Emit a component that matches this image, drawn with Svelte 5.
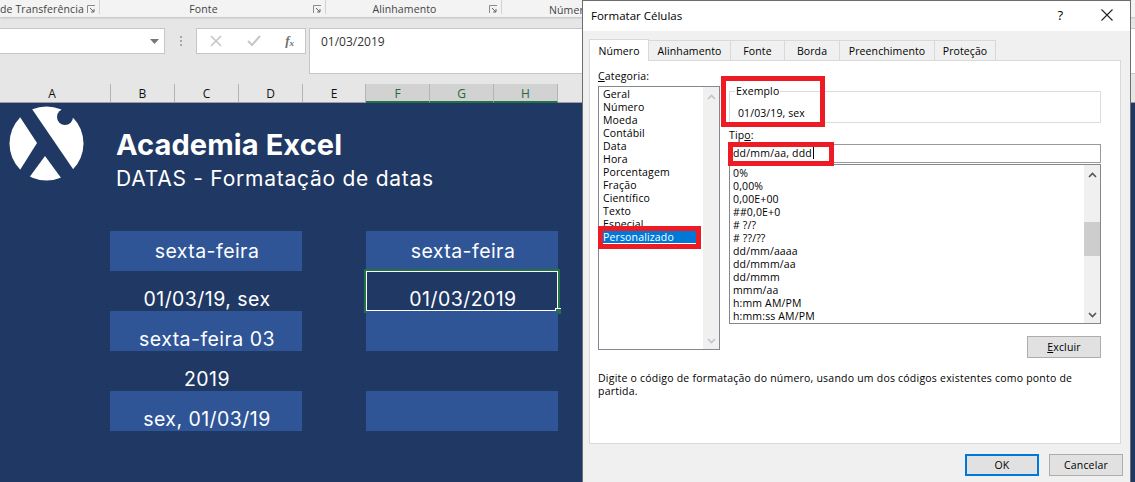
<script lang="ts">
  const columns = [
    { name: "A", width: 111, first: true },
    { name: "B", width: 64 },
    { name: "C", width: 64 },
    { name: "D", width: 64 },
    { name: "E", width: 63 },
    { name: "F", width: 64, selected: true },
    { name: "G", width: 64, selected: true },
    { name: "H", width: 64, selected: true }
  ];

  const ribbonGroups = [
    { label: "de Transferência", width: 100, align: "right" },
    { label: "Fonte", width: 226 },
    { label: "Alinhamento", width: 176 }
  ];

  const cellRows = [
    { left: "sexta-feira", right: "sexta-feira", fill: true, middle: true },
    { left: "01/03/19, sex", right: "01/03/2019", selected: true },
    { left: "sexta-feira 03", right: "", fill: true },
    { left: "2019", right: "" },
    { left: "sex, 01/03/19", right: "", fill: true }
  ];

  const tabs = ["Número", "Alinhamento", "Fonte", "Borda", "Preenchimento", "Proteção"];
  const tabWidths = [60, 82, 54, 55, 95, 61];

  const categories = [
    "Geral", "Número", "Moeda", "Contábil", "Data", "Hora", "Porcentagem",
    "Fração", "Científico", "Texto", "Especial", "Personalizado"
  ];

  const formats = [
    "0%", "0,00%", "0,00E+00", "##0,0E+0", "# ?/?", "# ??/??", "dd/mm/aaaa",
    "dd/mmm/aa", "dd/mmm", "mmm/aa", "h:mm AM/PM", "h:mm:ss AM/PM"
  ];
</script>

<div class="screen">
  <div class="ribbon">
    {#each ribbonGroups as group}
      <div class="ribbon-group" class:end={group.align === "right"} style="width: {group.width}px">
        <span class="ribbon-label">{group.label}</span>
        <svg class="launcher" width="9" height="9" viewBox="0 0 9 9">
          <path d="M.5 8V.5H8M.5.5" fill="none" stroke="#8a8a8a" />
          <path d="M3 3l4 4M7 4v3H4" fill="none" stroke="#666" />
        </svg>
      </div>
    {/each}
    <span class="ribbon-label number-label">Número</span>
  </div>

  <div class="formula-bar">
    <div class="name-box">
      <svg width="9" height="5" viewBox="0 0 9 5"><path d="M0 0h9L4.5 5z" fill="#777" /></svg>
    </div>
    <div class="grip"><i></i><i></i><i></i></div>
    <div class="formula-buttons">
      <svg width="12" height="12" viewBox="0 0 12 12"><path d="M1 1l10 10M11 1L1 11" stroke="#c6c6c6" stroke-width="1.6" /></svg>
      <svg width="14" height="12" viewBox="0 0 14 12"><path d="M1 6l4 4 8-9" fill="none" stroke="#c6c6c6" stroke-width="2" /></svg>
      <span class="fx">f<sub>x</sub></span>
    </div>
    <div class="formula-input">01/03/2019</div>
  </div>

  <div class="column-headers">
    {#each columns as col}
      <div class="column" class:first={col.first} class:selected={col.selected} style="width: {col.width}px">{col.name}</div>
    {/each}
  </div>

  <div class="sheet">
    <div class="banner">
      <svg class="logo" width="76" height="76" viewBox="0 0 76 76">
        <defs>
          <clipPath id="disc"><circle cx="37.5" cy="37.5" r="37" /></clipPath>
        </defs>
        <g clip-path="url(#disc)">
          <path d="M-2 0L11 11 28 37 11 64-2 76z" fill="#fff" />
          <path d="M23 3L30-2H80V80H80L64 63z" fill="#fff" />
          <path d="M36 50L58 80H14z" fill="#fff" />
        </g>
        <circle cx="56" cy="11" r="8" fill="#203864" />
        <path d="M52 3L54-2H80V12H63z" fill="#203864" />
      </svg>
      <div class="titles">
        <h1>Academia Excel</h1>
        <p>DATAS - Formatação de datas</p>
      </div>
    </div>

    <div class="cells">
      {#each cellRows as row}
        <div class="cell" class:fill={row.fill} class:middle={row.middle}>{row.left}</div>
        <div class="cell" class:fill={row.fill} class:middle={row.middle} class:active={row.selected}>{row.right}</div>
      {/each}
    </div>
  </div>

  <div class="dialog">
    <div class="title-bar">
      <span>Formatar Células</span>
      <span class="help">?</span>
      <svg class="close" width="12" height="12" viewBox="0 0 12 12"><path d="M.5.5l11 11M11.5.5l-11 11" stroke="#222" stroke-width="1.1" /></svg>
    </div>

    <div class="tabs">
      {#each tabs as tab, i}
        <div class="tab" class:current={i === 0} style="width: {tabWidths[i]}px">{tab}</div>
      {/each}
    </div>

    <div class="panel">
      <div class="panel-columns">
        <div class="category-col">
          <div class="field-label"><u>C</u>ategoria:</div>
          <div class="listbox category-list">
            <ul>
              {#each categories as item}
                <li class:picked={item === "Personalizado"}>{item}</li>
              {/each}
            </ul>
            <div class="scrollbar muted">
              <svg width="9" height="6" viewBox="0 0 9 6"><path d="M1 5l3.5-3.5L8 5" fill="none" stroke="#c4c4c4" stroke-width="1.6" /></svg>
              <svg width="9" height="6" viewBox="0 0 9 6"><path d="M1 1l3.5 3.5L8 1" fill="none" stroke="#c4c4c4" stroke-width="1.6" /></svg>
            </div>
          </div>
          <span class="mark mark-category"></span>
        </div>

        <div class="format-col">
          <fieldset class="sample">
            <legend>Exemplo</legend>
            <div>01/03/19, sex</div>
          </fieldset>
          <span class="mark mark-sample"></span>

          <div class="field-label type-label">Tip<u>o</u>:</div>
          <div class="type-input">dd/mm/aa, ddd<span class="caret"></span></div>
          <span class="mark mark-type"></span>

          <div class="listbox format-list">
            <ul>
              {#each formats as item}
                <li>{item}</li>
              {/each}
            </ul>
            <div class="scrollbar">
              <svg width="9" height="6" viewBox="0 0 9 6"><path d="M1 5l3.5-3.5L8 5" fill="none" stroke="#555" stroke-width="1.6" /></svg>
              <div class="thumb"></div>
              <svg width="9" height="6" viewBox="0 0 9 6"><path d="M1 1l3.5 3.5L8 1" fill="none" stroke="#555" stroke-width="1.6" /></svg>
            </div>
          </div>

          <div class="delete-row">
            <button class="btn"><u>E</u>xcluir</button>
          </div>
        </div>
      </div>

      <p class="hint">Digite o código de formatação do número, usando um dos códigos existentes como ponto de<br />partida.</p>
    </div>

    <div class="footer">
      <button class="btn primary">OK</button>
      <button class="btn">Cancelar</button>
    </div>
  </div>
</div>

<style>
  :global(body) {
    margin: 0;
  }

  .screen {
    position: relative;
    width: 1135px;
    height: 482px;
    overflow: hidden;
    display: flex;
    flex-direction: column;
    background: #203864;
    font-family: "Open Sans", "Noto Sans", sans-serif;
    font-size: 11px;
    color: #1a1a1a;
  }

  /* ribbon */
  .ribbon {
    height: 17px;
    flex: none;
    display: flex;
    background: #f3f3f3;
    box-shadow: 0 1px 2px #bdbdbd;
    position: relative;
    z-index: 1;
  }
  .ribbon-group {
    box-sizing: border-box;
    display: flex;
    align-items: center;
    justify-content: center;
    padding-right: 18px;
    position: relative;
    border-right: 1px solid #d2d2d2;
    height: 14px;
  }
  .ribbon-group.end {
    justify-content: flex-start;
    padding-right: 0;
  }
  .ribbon-label {
    color: #444;
    font-size: 10.5px;
    line-height: 20px;
    height: 17px;
    letter-spacing: 0.12px;
    white-space: nowrap;
  }
  .launcher {
    position: absolute;
    right: 3px;
    top: 5px;
  }
  .number-label {
    margin-left: 47px;
  }

  /* formula bar */
  .formula-bar {
    height: 67px;
    flex: none;
    box-sizing: border-box;
    display: flex;
    align-items: flex-start;
    padding-top: 11px;
    background: #e6e6e6;
  }
  .name-box {
    width: 165px;
    height: 26px;
    box-sizing: border-box;
    display: flex;
    align-items: center;
    justify-content: flex-end;
    padding-right: 5px;
    background: #fff;
    border: 1px solid #c6c6c6;
    border-left: none;
  }
  .grip {
    width: 31px;
    height: 26px;
    display: flex;
    flex-direction: column;
    align-items: center;
    justify-content: center;
    gap: 2px;
  }
  .grip i {
    width: 2px;
    height: 2px;
    background: #a8a8a8;
  }
  .formula-buttons {
    width: 110px;
    height: 26px;
    box-sizing: border-box;
    display: flex;
    align-items: center;
    justify-content: space-between;
    padding: 0 11px 0 13px;
    background: #fff;
    border: 1px solid #c6c6c6;
  }
  .fx {
    font-family: "Liberation Serif", serif;
    font-style: italic;
    font-weight: 700;
    font-size: 13px;
    color: #6e6e6e;
  }
  .fx sub {
    font-size: 9px;
    vertical-align: -1px;
  }
  .formula-input {
    flex: 1;
    height: 46px;
    margin-left: 3px;
    box-sizing: border-box;
    padding: 4px 11px;
    background: #fff;
    border: 1px solid #c6c6c6;
    border-right: none;
    font-size: 12px;
    color: #333;
  }

  /* sheet headers */
  .column-headers {
    height: 19px;
    flex: none;
    display: flex;
    background: #e6e6e6;
    border-bottom: 1px solid #9e9e9e;
    box-sizing: border-box;
  }
  .column {
    box-sizing: border-box;
    text-align: center;
    line-height: 19px;
    font-size: 12px;
    color: #111;
    border-right: 1px solid #b4b4b4;
  }
  .column.first {
    padding-right: 6px;
  }
  .column.selected {
    background: #d2d2d2;
    color: #1d6a3f;
    height: 19px;
    border-bottom: 2px solid #217346;
  }

  /* sheet body */
  .sheet {
    flex: 1;
    min-height: 0;
    color: #fff;
    font-family: "Inter", "Lato", sans-serif;
  }
  .banner {
    height: 128px;
    box-sizing: border-box;
    display: flex;
    align-items: flex-start;
    padding: 3px 0 0 9px;
  }
  .logo {
    flex: none;
  }
  .titles {
    margin-left: 31px;
    padding-top: 21px;
  }
  .titles h1 {
    margin: 0;
    font-size: 29px;
    line-height: 36px;
    font-weight: 700;
    letter-spacing: 0.1px;
    white-space: nowrap;
  }
  .titles p {
    margin: 2px 0 0;
    font-size: 21px;
    line-height: 28px;
    letter-spacing: 0.75px;
    white-space: nowrap;
  }
  .cells {
    display: grid;
    grid-template-columns: 192px 192px;
    grid-auto-rows: 40px;
    column-gap: 64px;
    margin-left: 110px;
    width: 448px;
  }
  .cell {
    box-sizing: border-box;
    display: flex;
    align-items: flex-end;
    justify-content: center;
    font-size: 19.5px;
    line-height: 21px;
    padding: 0 0 1px 2px;
    letter-spacing: 0.45px;
    position: relative;
  }
  .cell.fill {
    background: #2f5597;
  }
  .cell.middle {
    align-items: center;
    padding: 1px 0 0 2px;
  }
  .cell.active {
    outline: 2px solid #217346;
    outline-offset: 0;
    box-shadow: inset 0 0 0 1px #fff;
  }
  .cell.active::after {
    content: "";
    position: absolute;
    right: -3px;
    bottom: -3px;
    width: 5px;
    height: 5px;
    background: #217346;
    border-top: 1px solid #fff;
    border-left: 1px solid #fff;
  }

  /* dialog window */
  .dialog {
    position: absolute;
    left: 582px;
    top: 0;
    width: 549px;
    height: 490px;
    box-sizing: border-box;
    display: flex;
    flex-direction: column;
    background: #f0f0f0;
    border: 1px solid #6d6d6d;
    border-bottom: none;
    font-family: "Open Sans", "Noto Sans", sans-serif;
    font-size: 10.5px;
    color: #000;
    z-index: 2;
  }
  .title-bar {
    height: 30px;
    flex: none;
    box-sizing: border-box;
    display: flex;
    align-items: center;
    padding: 0 17px 2px 8px;
    background: #fff;
    font-size: 11.5px;
  }
  .help {
    margin-left: auto;
    margin-right: 38px;
    font-size: 13px;
  }
  .tabs {
    display: flex;
    margin: 7px 0 0 6px;
    height: 22px;
    align-items: flex-end;
  }
  .tab {
    box-sizing: border-box;
    height: 20px;
    line-height: 20px;
    text-align: center;
    background: #f0f0f0;
    border: 1px solid #d9d9d9;
    border-bottom: none;
    border-left: none;
    white-space: nowrap;
    letter-spacing: 0.1px;
  }
  .tab.current {
    height: 22px;
    line-height: 22px;
    background: #fff;
    border-left: 1px solid #d9d9d9;
    margin-bottom: -1px;
    position: relative;
    z-index: 1;
  }
  .panel {
    box-sizing: border-box;
    margin-left: 6px;
    width: 532px;
    height: 384px;
    flex: none;
    padding: 8px 9px 0 8px;
    background: #fff;
    border: 1px solid #d9d9d9;
  }
  .panel-columns {
    display: flex;
    gap: 9px;
  }
  .category-col {
    position: relative;
    width: 122px;
    flex: none;
  }
  .format-col {
    position: relative;
    flex: 1;
    padding-right: 10px;
    min-width: 0;
  }
  .field-label {
    line-height: 15px;
    letter-spacing: 0.15px;
  }
  .listbox {
    display: flex;
    box-sizing: border-box;
    border: 1px solid #828790;
    background: #fff;
    overflow: hidden;
  }
  .listbox ul {
    flex: 1;
    min-width: 0;
    margin: 0;
    padding: 2px 0 0 3px;
    list-style: none;
  }
  .listbox li {
    height: 13px;
    line-height: 13px;
    white-space: nowrap;
    letter-spacing: 0.15px;
  }
  .category-list {
    height: 264px;
    margin-top: 2px;
  }
  .category-list ul {
    padding: 1px 6px 0 4px;
  }
  .category-list li.picked {
    background: #0078d7;
    color: #fff;
    height: 12px;
    line-height: 12px;
    position: relative;
    z-index: 1;
  }
  .scrollbar {
    width: 16px;
    flex: none;
    display: flex;
    flex-direction: column;
    align-items: center;
    justify-content: flex-start;
    padding: 7px 0 5px;
    box-sizing: border-box;
    background: #f0f0f0;
  }
  .scrollbar.muted {
    justify-content: space-between;
  }
  .thumb {
    align-self: stretch;
    margin: 44px 0 0;
    height: 34px;
    background: #cdcdcd;
  }
  .thumb + svg {
    margin-top: auto;
  }

  .sample {
    margin: 17px 0 0;
    padding: 0 0 0 8px;
    height: 37px;
    box-sizing: border-box;
    border: 1px solid #dcdcdc;
    min-inline-size: 0;
  }
  .sample legend {
    padding: 0 1px;
    margin-left: -3px;
    line-height: 11px;
    letter-spacing: 0.15px;
  }
  .sample div {
    line-height: 13px;
    margin-top: 10px;
    letter-spacing: 0.1px;
  }
  .type-label {
    margin-top: 5px;
  }
  .type-input {
    height: 19px;
    box-sizing: border-box;
    padding-left: 3px;
    line-height: 17px;
    border: 1px solid #9a9a9a;
    letter-spacing: 0.2px;
    margin-top: 1px;
  }
  .caret {
    display: inline-block;
    width: 1px;
    height: 13px;
    background: #000;
    vertical-align: -2px;
    margin-left: 1px;
  }
  .format-list {
    height: 160px;
    margin-top: 1px;
  }
  .format-list ul {
    padding: 2px 0 0 3px;
  }
  .delete-row {
    display: flex;
    justify-content: flex-end;
    margin-top: 12px;
  }

  .btn {
    width: 74px;
    height: 22px;
    box-sizing: border-box;
    padding: 0;
    background: #e1e1e1;
    border: 1px solid #adadad;
    font: inherit;
    color: #000;
    letter-spacing: 0.15px;
  }
  .btn.primary {
    border: 2px solid #0078d7;
  }
  .hint {
    margin: 14px 0 0;
    line-height: 13px;
    letter-spacing: 0.22px;
  }
  .footer {
    display: flex;
    justify-content: flex-end;
    gap: 10px;
    margin-top: 10px;
    padding-right: 7px;
  }

  /* red marks drawn over the print screen */
  .mark {
    position: absolute;
    box-sizing: border-box;
    border: 5px solid #ed1c24;
    pointer-events: none;
    z-index: 3;
  }
  .mark-category {
    left: 0;
    top: 157px;
    width: 103px;
    height: 23px;
  }
  .mark-sample {
    left: -8px;
    top: 7px;
    width: 104px;
    height: 51px;
  }
  .mark-type {
    left: -1px;
    top: 73px;
    width: 106px;
    height: 24px;
  }
</style>
